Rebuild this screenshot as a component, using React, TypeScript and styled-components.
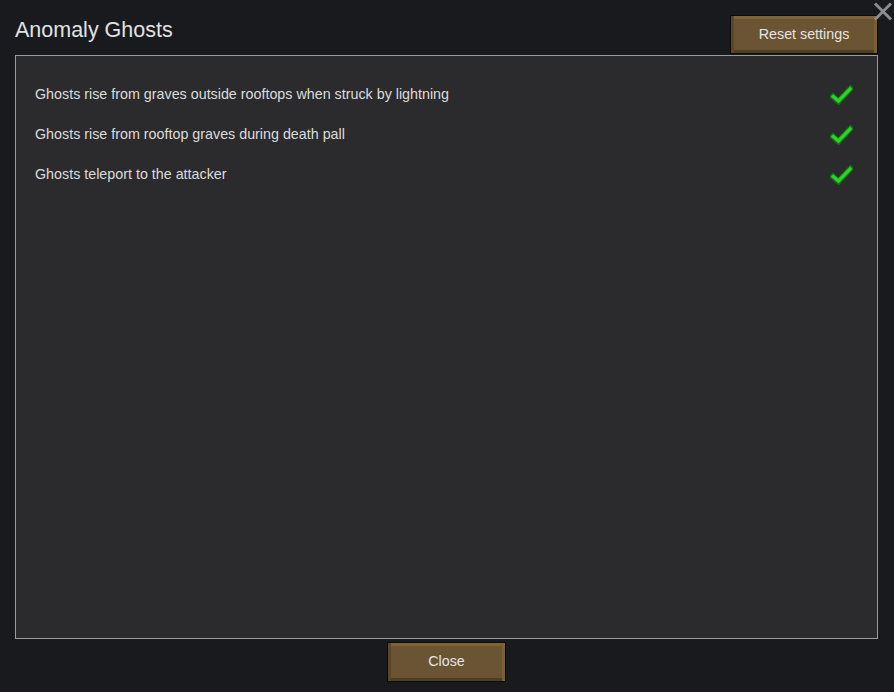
import React from "react";
import styled, { createGlobalStyle } from "styled-components";

const Global = createGlobalStyle`
  html, body { margin: 0; padding: 0; background: #181a1e; }
  body { font-family: "Liberation Sans", Arial, sans-serif; }
  * { box-sizing: border-box; }
`;

const Window = styled.div`
  position: relative;
  width: 894px;
  height: 692px;
  display: flex;
  flex-direction: column;
  padding: 0 16px 0 15px;
  background: #181a1e;
  color: #dedede;
`;

const Header = styled.div`
  height: 55px;
  display: flex;
  align-items: flex-start;
  justify-content: space-between;
`;

const Title = styled.h1`
  margin: 17px 0 0 0;
  font-size: 21.5px;
  font-weight: normal;
  line-height: 26px;
  color: #e2e2e2;
`;

const WoodButton = styled.button<{ $w: number; $h: number }>`
  width: ${(p) => p.$w}px;
  height: ${(p) => p.$h}px;
  border: 1px solid #0c0c0c;
  padding: 0 0 2px 0;
  background: #6a5433;
  box-shadow: inset 3px 0 0 #5a4629, inset 0 3px 0 #7c6438, inset -3px 0 0 #775f36,
    inset 0 -3px 0 #4e3e24;
  color: #e4e4e4;
  font-family: "Liberation Sans", Arial, sans-serif;
  font-size: 14.3px;
  cursor: pointer;
`;

const ResetButton = styled(WoodButton)`
  margin-top: 15px;
`;

const Panel = styled.div`
  flex: 1;
  border: 1px solid #9b9b9b;
  background: #2b2b2d;
  padding: 18px 24px 0 19px;
  display: flex;
  flex-direction: column;
`;

const Row = styled.div`
  height: 40px;
  display: flex;
  align-items: center;
  justify-content: space-between;
  font-size: 14.3px;
  color: #dcdcdc;
`;

const CheckBox = styled.svg`
  margin-top: 2px;
`;

const Footer = styled.div`
  height: 53px;
  display: flex;
  justify-content: center;
  align-items: flex-start;
  padding-top: 3px;
`;

const CloseX = styled.svg`
  position: absolute;
  top: 2px;
  right: 1px;
`;

const Check = () => (
  <CheckBox width="23" height="20" viewBox="0 0 23 20">
    <path
      d="M3 11.5 L8.5 16.5 L20.5 3.5"
      fill="none"
      stroke="#137a13"
      strokeWidth="5.6"
      strokeLinecap="square"
    />
    <path
      d="M3.3 11.5 L8.5 16 L20 4"
      fill="none"
      stroke="#2ad22a"
      strokeWidth="3.3"
      strokeLinecap="square"
    />
  </CheckBox>
);

const items = [
  "Ghosts rise from graves outside rooftops when struck by lightning",
  "Ghosts rise from rooftop graves during death pall",
  "Ghosts teleport to the attacker",
];

export default function App() {
  return (
    <>
      <Global />
      <Window>
        <Header>
          <Title>Anomaly Ghosts</Title>
          <ResetButton $w={148} $h={39}>Reset settings</ResetButton>
        </Header>
        <Panel>
          {items.map((t) => (
            <Row key={t}>
              <span>{t}</span>
              <Check />
            </Row>
          ))}
        </Panel>
        <Footer>
          <WoodButton $w={119} $h={40}>Close</WoodButton>
        </Footer>
        <CloseX width="20" height="19" viewBox="0 0 20 19">
          <path d="M2 1.5 L18 17.5 M18 1.5 L2 17.5" stroke="#8c8c8c" strokeWidth="3" />
        </CloseX>
      </Window>
    </>
  );
}
